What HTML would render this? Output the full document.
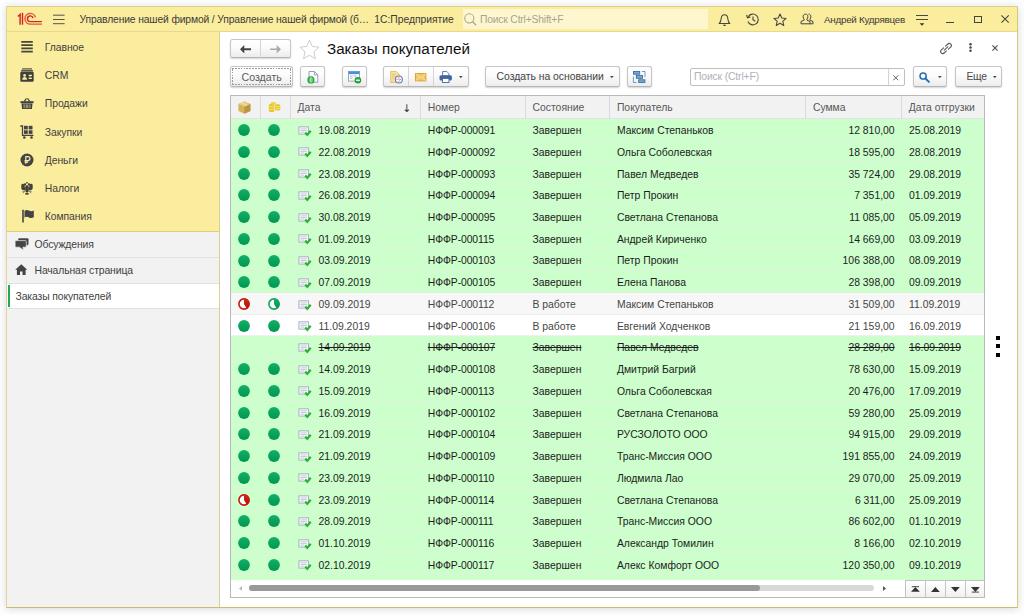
<!DOCTYPE html>
<html lang="ru">
<head>
<meta charset="utf-8">
<title>Заказы покупателей</title>
<style>
html,body{margin:0;padding:0;}
body{width:1024px;height:615px;overflow:hidden;background:#fefefe;font-family:"Liberation Sans",Arial,sans-serif;font-size:10.4px;color:#333;position:relative;}
.a{position:absolute;}
#win{left:6px;top:6px;width:1012px;height:602px;box-sizing:border-box;border:1px solid #d9cc86;border-color:#ddd08a #d6c97e #cbbd68 #e0d592;background:#fff;box-shadow:0 1px 8px rgba(0,0,0,.15);}
#tbar{left:7px;top:7px;width:1010px;height:24px;background:#fbed9e;border-bottom:1px solid #e6d88f;}
#sy{left:7px;top:32px;width:212px;height:200px;background:#fbed9e;border-bottom:1px solid #dccd80;box-sizing:border-box;}
#sg{left:7px;top:232px;width:212px;height:374.500px;background:#f2f2f2;}
#sb{left:219px;top:32px;width:1px;height:575px;background:#dccf92;}
.tt{top:13px;height:13px;line-height:13px;font-size:10.3px;letter-spacing:-0.17px;color:#3a3a3a;white-space:nowrap;}
.sit{left:44.8px;height:14px;line-height:14px;white-space:nowrap;color:#3f3f3f;letter-spacing:-0.08px;margin-top:1.2px;}
.sic{left:20px;width:14px;height:14px;}
.gl{left:7px;width:212px;height:1px;background:#e1e1e1;}
.git{height:14px;line-height:14px;white-space:nowrap;color:#3f3f3f;letter-spacing:-0.12px;margin-top:1px;}
.btn{box-sizing:border-box;border:1px solid #c6c6c6;border-bottom-color:#b6b6b6;border-radius:2.5px;background:linear-gradient(#ffffff,#fbfbfb 45%,#ececec);box-shadow:0 1px 1.5px rgba(0,0,0,.17);}
.dsh{box-sizing:border-box;background:repeating-linear-gradient(90deg,#9c9c9c 0 1.800px,transparent 1.800px 2.900px) 0 0/100% 1px no-repeat,repeating-linear-gradient(90deg,#9c9c9c 0 1.800px,transparent 1.800px 2.900px) 0 100%/100% 1px no-repeat,repeating-linear-gradient(0deg,#9c9c9c 0 1.800px,transparent 1.800px 2.900px) 0 0/1px 100% no-repeat,repeating-linear-gradient(0deg,#9c9c9c 0 1.800px,transparent 1.800px 2.900px) 100% 0/1px 100% no-repeat;}
.bt{font-size:10.4px;color:#444;white-space:nowrap;height:14px;line-height:14px;}
#tbl{left:230px;top:95px;width:755px;height:503px;box-sizing:border-box;border:1px solid #b9b9b9;background:#fff;overflow:hidden;}
#hdr{left:231px;top:96px;width:753px;height:22.6px;background:#f2f2f2;}
.hd{top:100.5px;height:14px;line-height:14px;color:#585858;white-space:nowrap;}
.hv{top:96px;width:1px;height:22.6px;background:#dadada;}
#rows{left:231px;top:95.5px;width:753px;height:484.5px;overflow:hidden;}
.row{position:absolute;left:0;width:753px;box-sizing:border-box;border-bottom:1px solid #d9f3d9;}
.rg{background:#ccffcc;color:#1c1c1c;}
.rs{background:#f7f7f7;color:#454545;border-bottom-color:#ededed;}
.rw{background:#ffffff;color:#454545;border-bottom-color:#f0f0f0;}
.rx .t{text-decoration:line-through;}
.t{position:absolute;top:4.4px;height:14px;line-height:14px;white-space:nowrap;}
.tdate{left:87.5px;}
.tnum{left:196.8px;letter-spacing:-0.1px;}
.tst{left:301.5px;}
.tbuy{left:385.9px;}
.tsum{right:89.4px;}
.tship{left:678px;}
.c1,.c2,.cd{position:absolute;}
.c1{left:6.8px;top:5.1px;}
.c2{left:37px;top:5.1px;}
.ci{display:block;width:12px;height:12px;}
.cd{left:67px;top:6.4px;}
.doc{display:block;width:14px;height:12px;}
svg{overflow:visible;}
</style>
</head>
<body>
<svg width="0" height="0" style="position:absolute"><defs>
<linearGradient id="gg" x1="0" y1="0" x2="0" y2="1"><stop offset="0" stop-color="#14ae66"/><stop offset="1" stop-color="#009850"/></linearGradient>
<linearGradient id="gr" x1="0" y1="0" x2="0" y2="1"><stop offset="0" stop-color="#d02a14"/><stop offset="1" stop-color="#b30f08"/></linearGradient>
</defs></svg>
<div id="win" class="a"></div>
<div id="tbar" class="a"></div>
<div id="sy" class="a"></div>
<div id="sg" class="a"></div>
<div id="sb" class="a"></div>

<!-- title bar -->
<svg class="a" style="left:17px;top:12px;width:26px;height:14px" viewBox="0 0 26 14">
<g fill="none" stroke="#d8232a" stroke-width="1.450">
<path d="M0.900 4.600L3.100 2.500V12.700"/>
<path d="M5.500 0.800V12.700"/>
<path d="M16.050 6.010A2.850 2.850 0 1 0 13.300 9.600L24.900 9.600"/>
<path d="M18.470 5.370A5.350 5.350 0 1 0 13.300 12.100L24.900 12.100" stroke="#e4533f"/>
</g>
</svg>
<svg class="a" style="left:53px;top:14px;width:12px;height:11px" viewBox="0 0 12 11"><path d="M0 1.200h11.600M0 5.500h11.600M0 9.700h11.600" stroke="#55554a" stroke-width="1"/></svg>
<div class="a tt" style="left:79.5px;letter-spacing:-0.13px">Управление нашей фирмой / Управление нашей фирмой (б…</div>
<div class="a tt" style="left:374.300px;letter-spacing:0">1С:Предприятие</div>
<div class="a" style="left:462.5px;top:9px;width:245.5px;height:19.6px;background:#fdf6cf"></div>
<svg class="a" style="left:464.200px;top:12.600px;width:12.800px;height:12.800px" viewBox="0 0 12 12"><circle cx="5" cy="5" r="4.300" fill="none" stroke="#a9a796" stroke-width="1"/><path d="M8.100 8.100l3.300 3.300" stroke="#a9a796" stroke-width="1.300"/></svg>
<div class="a tt" style="left:480px;color:#a7a48f">Поиск Ctrl+Shift+F</div>
<!-- bell -->
<svg class="a" style="left:718px;top:12.5px;width:13px;height:14px" viewBox="0 0 13 14"><path d="M1.2 10.5c1.6-1.2 1.8-2.6 2-5 .2-2.4 1.4-3.8 3.3-3.8s3.100 1.400 3.300 3.800c.2 2.400.4 3.800 2 5z" fill="none" stroke="#444" stroke-width="1.1" stroke-linejoin="round"/><path d="M5.300 12.300h2.400" stroke="#444" stroke-width="1.3"/></svg>
<!-- history -->
<svg class="a" style="left:745.5px;top:13px;width:13.5px;height:13px" viewBox="0 0 13.5 13"><path d="M2.300 3.600A5.400 5.400 0 1 1 1.900 8.500" fill="none" stroke="#444" stroke-width="1.1"/><path d="M0.600 1.800l0.800 3 2.900-0.900" fill="none" stroke="#444" stroke-width="1.1"/><path d="M7 3.500v3.300l2.200 1.500" fill="none" stroke="#444" stroke-width="1.1"/></svg>
<!-- star -->
<svg class="a" style="left:773px;top:12.500px;width:14px;height:13.500px" viewBox="0 0 14 13.5"><path d="M7 1l1.800 4 4.300.4-3.300 2.900 1 4.200L7 10.300 3.200 12.500l1-4.200L.9 5.400 5.200 5z" fill="none" stroke="#444" stroke-width="1.050" stroke-linejoin="round"/></svg>
<!-- users -->
<svg class="a" style="left:800px;top:13px;width:14px;height:13px" viewBox="0 0 14 13"><path d="M8.5 1.100c1.600 0 2.400 1.200 2.400 2.600 0 1.100-.4 1.900-1 2.500v.9l3.100 1.400v2.300H9.500" fill="none" stroke="#444" stroke-width="1"/><path d="M5.500 1.100c1.600 0 2.400 1.200 2.400 2.600 0 1.100-.4 1.900-1 2.500v.9l3.100 1.400v2.300H1v-2.300l3.100-1.400v-.9c-.6-.6-1-1.400-1-2.500 0-1.400.8-2.600 2.400-2.600z" fill="#fbed9e" stroke="#444" stroke-width="1"/></svg>
<div class="a tt" style="left:824px;font-size:9.8px;letter-spacing:-0.24px">Андрей Кудрявцев</div>
<svg class="a" style="left:916px;top:15px;width:12px;height:11px" viewBox="0 0 12 11"><path d="M0 0.500h12M0 4.500h12" stroke="#4a4a40" stroke-width="1"/><path d="M3.600 8.300h4.800l-2.400 2.500z" fill="#333"/></svg>
<div class="a" style="left:946px;top:22px;width:8px;height:1px;background:#444"></div>
<div class="a" style="left:974px;top:15.500px;width:7.500px;height:7.500px;box-sizing:border-box;border:1px solid #444"></div>
<svg class="a" style="left:1000.800px;top:15px;width:8.200px;height:8.200px" viewBox="0 0 9 9"><path d="M.5.500l8 8M8.500.5l-8 8" stroke="#45453c" stroke-width="1.150"/></svg>

<!-- sidebar sections -->
<svg class="a sic" style="top:40px" viewBox="0 0 14 14"><path d="M1.300 1.900h11.500M1.300 5.150h11.500M1.300 8.400h11.500M1.300 11.650h11.500" stroke="#46463e" stroke-width="1.750"/></svg>
<div class="a sit" style="top:40px">Главное</div>
<svg class="a sic" style="top:68px" viewBox="0 0 14 14"><path d="M2.300 0.300h9.400l0.600 1.300H1.700zM1.300 2.100h11.400l0.600 1.500H0.700z" fill="#55554a"/><rect x="0.300" y="3.800" width="13.400" height="9.900" rx="1.300" fill="#3f3f3f"/><circle cx="4.600" cy="7.400" r="1.400" fill="#fbed9e"/><path d="M2.200 11.800c0-1.900 1-2.700 2.400-2.700s2.400.8 2.400 2.700z" fill="#fbed9e"/><path d="M8.600 7.300h3.300M8.600 10.400h3.300" stroke="#fbed9e" stroke-width="1.200"/><path d="M9.300 8.850h1.900" stroke="#fbed9e" stroke-width="0.900" opacity="0.700"/></svg>
<div class="a sit" style="top:68px">CRM</div>
<svg class="a sic" style="top:96px" viewBox="0 0 14 14"><path d="M4.300 5.300L6.500 2.300M9.700 5.300L7.500 2.300" stroke="#44443c" stroke-width="1.200" fill="none"/><rect x="0.500" y="5.200" width="13" height="2" fill="#3f3f3f"/><path d="M1.500 7.600h11l-0.600 5.400H2.100z" fill="#3f3f3f"/><path d="M4.100 8.400v3.800M6.200 8.400v3.800M7.800 8.400v3.800M9.900 8.400v3.800" stroke="#fbed9e" stroke-width="0.800" opacity="0.850"/></svg>
<div class="a sit" style="top:96px">Продажи</div>
<svg class="a sic" style="top:124.500px" viewBox="0 0 14 14"><path d="M0.300 1h2.200v9.300h11" fill="none" stroke="#444" stroke-width="1.300"/><rect x="4" y="0.800" width="3.800" height="3.600" fill="#444"/><rect x="8.700" y="0.800" width="3.800" height="3.600" fill="#444"/><rect x="4" y="5.300" width="3.800" height="3.600" fill="#444"/><rect x="8.700" y="5.300" width="3.800" height="3.600" fill="#444"/><circle cx="4.300" cy="12.500" r="1.300" fill="#444"/><circle cx="11.500" cy="12.500" r="1.300" fill="#444"/></svg>
<div class="a sit" style="top:124.500px">Закупки</div>
<svg class="a sic" style="top:153px" viewBox="0 0 14 14"><circle cx="7" cy="7" r="6.500" fill="#444"/><path d="M5.800 10.800V3.600h2.100a2 2 0 0 1 0 4H4.600M4.600 9.100h3.600" fill="none" stroke="#fbed9e" stroke-width="1.200"/></svg>
<div class="a sit" style="top:153px">Деньги</div>
<svg class="a" style="left:21px;top:182px;width:12px;height:13px" viewBox="0 0 12 13"><g fill="#41413a"><rect x="5.300" y="0" width="1.400" height="1.600"/><circle cx="4" cy="2.300" r="1.150"/><circle cx="8" cy="2.300" r="1.150"/><path d="M0.300 3.400C0.200 1.900 1.900 1.200 2.900 2.300L4.700 4.800V8.300C3 8.700 0.700 8.100 0.300 6.500z"/><path d="M11.700 3.400C11.800 1.900 10.100 1.200 9.100 2.300L7.300 4.800V8.300C9 8.700 11.300 8.100 11.700 6.500z"/><path d="M4.500 3.300H7.500V9.400L6 10.900 4.500 9.400z"/><ellipse cx="6" cy="11.800" rx="2.100" ry="0.900"/></g><path d="M4.300 8.800L2 11.200M7.700 8.800L10 11.200M3 9.600L1.200 9.800M9 9.600L10.800 9.800" stroke="#41413a" stroke-width="0.800" opacity="0.750"/><path d="M4.700 3.600L3.300 5.300M7.300 3.600L8.700 5.300" stroke="#fbed9e" stroke-width="0.700" opacity="0.800"/></svg>
<div class="a sit" style="top:181px">Налоги</div>
<svg class="a sic" style="top:209px;left:21px" viewBox="0 0 14 14"><path d="M2 0.800v12.700" stroke="#444" stroke-width="1.600"/><path d="M3.500 1.800c1.500-1 3-1 4.500-.2s3 .8 4.800-.2v6.800c-1.800 1-3.300 1-4.800.2s-3-.8-4.500.2z" fill="#444"/></svg>
<div class="a sit" style="top:209px">Компания</div>

<!-- sidebar open windows -->
<svg class="a" style="left:14.900px;top:237.600px;width:14px;height:13px" viewBox="0 0 14 13"><rect x="3.300" y="0.200" width="10.200" height="7" rx="1.100" fill="#454545"/><path d="M1.100 2.600h9.200a1 1 0 0 1 1 1v4.600a1 1 0 0 1-1 1H7.900l0.500 3.100L4.400 9.200H1.100a1 1 0 0 1-1-1V3.600a1 1 0 0 1 1-1z" fill="#454545" stroke="#f2f2f2" stroke-width=".7"/></svg>
<div class="a git" style="left:34.500px;top:237px">Обсуждения</div>
<div class="a gl" style="top:256.500px"></div>
<svg class="a" style="left:15px;top:264px;width:12.500px;height:11px" viewBox="0 0 12.500 11"><path d="M6.250 0.300L0.200 5.800h1.700V11h3.100V7.400h2.500V11h3.100V5.800h1.700z" fill="#444"/></svg>
<div class="a git" style="left:34.500px;top:263px">Начальная страница</div>
<div class="a gl" style="top:282.500px"></div>
<div class="a" style="left:7px;top:283.500px;width:212px;height:24.500px;background:#fff"></div>
<div class="a" style="left:8px;top:284.500px;width:2px;height:22px;background:#22a85a"></div>
<div class="a git" style="left:15.500px;top:289px">Заказы покупателей</div>
<div class="a gl" style="top:308px"></div>

<!-- page header -->
<div class="a btn" style="left:230px;top:39px;width:60.500px;height:19.300px"></div>
<div class="a" style="left:260px;top:40px;width:1px;height:17.600px;background:#d4d4d4"></div>
<svg class="a" style="left:240px;top:45px;width:11px;height:8.500px" viewBox="0 0 11 8.500"><path d="M4.300 0L0 4.250l4.300 4.250V5.300H11V3.200H4.300z" fill="#444"/></svg>
<svg class="a" style="left:269.500px;top:45px;width:11px;height:8.500px" viewBox="0 0 11 8.500"><path d="M6.700 0L11 4.250 6.700 8.500V5.100H0V3.400h6.700z" fill="#aaa"/></svg>
<svg class="a" style="left:298.850px;top:38.800px;width:20.900px;height:20.500px" viewBox="0 0 20 19" preserveAspectRatio="none"><path d="M10 1l2.700 5.900 6.300.7-4.700 4.300 1.300 6.300L10 15l-5.600 3.200 1.300-6.300L1 7.600l6.300-.7z" fill="#fff" stroke="#c1c8cf" stroke-width="0.85" stroke-linejoin="round"/></svg>
<div class="a" style="left:327px;top:39.500px;height:18px;line-height:18px;font-size:15.200px;color:#111;white-space:nowrap">Заказы покупателей</div>
<!-- link, dots, close -->
<svg class="a" style="left:939px;top:41.500px;width:14px;height:13px" viewBox="-7 -6.500 14 13"><g transform="rotate(-42)" fill="none" stroke="#5a5a5a" stroke-width="1.100" stroke-linecap="round"><path d="M-1.300 -2.100H-4.400A2.100 2.100 0 0 0 -4.400 2.100H-1.300"/><path d="M1.300 2.100H4.400A2.100 2.100 0 0 0 4.400 -2.100H1.300"/><path d="M-2.400 0H2.400"/></g></svg>
<svg class="a" style="left:968.800px;top:43.300px;width:3px;height:9px" viewBox="0 0 3 9"><circle cx="1.500" cy="1.250" r="1.250" fill="#4a4a4a"/><circle cx="1.500" cy="4.500" r="1.250" fill="#4a4a4a"/><circle cx="1.500" cy="7.750" r="1.250" fill="#4a4a4a"/></svg>
<svg class="a" style="left:992.200px;top:45.100px;width:6px;height:6px" viewBox="0 0 7 7"><path d="M.5.500l6 6M6.500.5l-6 6" stroke="#505050" stroke-width="1.400"/></svg>

<!-- toolbar -->
<div class="a btn" style="left:230px;top:66px;width:63px;height:21px"></div>
<div class="a dsh" style="left:232px;top:67.700px;width:58.800px;height:17.300px"></div>
<div class="a bt" style="left:241.500px;top:69.500px;font-size:10.600px;color:#5c5c5c">Создать</div>

<div class="a btn" style="left:300px;top:66px;width:25px;height:21px"></div>
<svg class="a" style="left:307px;top:71px;width:11.500px;height:12px" viewBox="0 0 11.500 12"><path d="M2 0.500h5.400l3.400 3.300v7.400H2z" fill="#fdfdfe" stroke="#8a96ab" stroke-width="0.900"/><path d="M7.400 0.500v3.300h3.400" fill="none" stroke="#8a96ab" stroke-width="0.900"/><circle cx="3.900" cy="8.900" r="3.600" fill="#2aa83a"/><path d="M3.900 6.300v5.200" stroke="#d5f5d5" stroke-width="1.300"/><path d="M2.200 7v3.800M5.600 7v3.800" stroke="#7fd489" stroke-width="0.800"/></svg>

<div class="a btn" style="left:342px;top:66px;width:25px;height:21px"></div>
<svg class="a" style="left:348px;top:71px;width:13.500px;height:12.500px" viewBox="0 0 13.500 12.500"><rect x="0.500" y="0.500" width="11" height="9.600" fill="#fbfcfe" stroke="#8aa0bd" stroke-width="0.900"/><rect x="0.500" y="0.500" width="11" height="2.600" fill="#4a8fdc"/><path d="M2 5h2.600M2 7.200h2.600M5.600 5h3" stroke="#9fb0c6" stroke-width="0.900"/><circle cx="9.900" cy="9.300" r="3.300" fill="#1f9e36"/><path d="M7.900 9.300h4" stroke="#fff" stroke-width="1.300"/><path d="M9.900 7.800v3" stroke="#bfe8c5" stroke-width="0.900"/></svg>

<div class="a btn" style="left:383px;top:66px;width:85.500px;height:21px"></div>
<div class="a" style="left:408px;top:67px;width:1px;height:18.600px;background:#d4d4d4"></div>
<div class="a" style="left:433px;top:67px;width:1px;height:18.600px;background:#d4d4d4"></div>
<svg class="a" style="left:390px;top:71.300px;width:13.500px;height:12.500px" viewBox="0 0 13.500 12.500"><path d="M0.700 0.500h5.800l2.700 2.700v8.300H0.700z" fill="#f3e19b" stroke="#dcc169" stroke-width="0.900"/><path d="M2.200 3.400h3.300M2.200 5.400h3.300M2.200 7.400h2" stroke="#dcc169" stroke-width="0.800"/><circle cx="8.900" cy="8.500" r="3.500" fill="#fdfdff" stroke="#5b7fc0" stroke-width="1.100"/><path d="M8.900 6.300v0.800M8.900 9.900v0.800M6.700 8.500h0.800M10.300 8.500h0.800" stroke="#d4442f" stroke-width="0.900"/><path d="M8.900 7.400v1.300l0.900 0.600" fill="none" stroke="#d4442f" stroke-width="0.700"/></svg>
<svg class="a" style="left:415px;top:73px;width:11.400px;height:8.400px" viewBox="0 0 11.400 8.400"><rect x="0.500" y="0.500" width="10.400" height="7.400" fill="#f3c664" stroke="#dba436" stroke-width="1"/><path d="M0.900 0.900L5.700 4.900 10.500 0.900M0.900 7.600l3.600-3.500M10.500 7.600L6.900 4.100" fill="none" stroke="#fbe6ae" stroke-width="0.900"/></svg>
<svg class="a" style="left:438.800px;top:71.200px;width:13.400px;height:12px" viewBox="0 0 13.400 12"><path d="M3.600 0.500h4.200l2 2v2.500H3.600z" fill="#fff" stroke="#56739f" stroke-width="0.900"/><rect x="0.500" y="4.200" width="12.400" height="5.300" rx="1.500" fill="#41669f"/><rect x="3.400" y="7.400" width="6.600" height="4.100" fill="#fff" stroke="#41669f" stroke-width="0.900"/></svg>
<svg class="a" style="left:458.6px;top:76.3px;width:3.6px;height:2.2px" viewBox="0 0 4 2.400"><path d="M0 0h4L2 2.400z" fill="#4a4a4a"/></svg>

<div class="a btn" style="left:485px;top:66px;width:134.600px;height:21px"></div>
<div class="a bt" style="left:496.500px;top:70.100px;letter-spacing:-0.020px">Создать на основании</div>
<svg class="a" style="left:610px;top:76.3px;width:3.6px;height:2.2px" viewBox="0 0 4 2.400"><path d="M0 0h4L2 2.400z" fill="#4a4a4a"/></svg>

<div class="a btn" style="left:626.500px;top:66px;width:25.200px;height:21px"></div>
<svg class="a" style="left:633px;top:71px;width:12.400px;height:12px" viewBox="0 0 12.400 12"><g fill="none" stroke="#5d8fc2" stroke-width="0.900"><path d="M9 0.500h3v5.500"/><path d="M3.400 11.500h-3v-6"/><path d="M3.500 3.200v2.600M7 7.300v1.400"/></g><g fill="#7da7d2" stroke="#3a6fa8" stroke-width="0.900"><rect x="0.500" y="0.500" width="6.200" height="2.700"/><rect x="3.300" y="4.400" width="6.200" height="2.900"/><rect x="5.700" y="8.800" width="6.200" height="2.700"/></g></svg>

<div class="a" style="left:690px;top:67.500px;width:215px;height:18.600px;box-sizing:border-box;border:1px solid #bfbfbf;border-radius:2px;background:#fff"></div>
<div class="a" style="left:887.500px;top:68.500px;width:1px;height:16.600px;background:#d4d4d4"></div>
<div class="a bt" style="left:694px;top:70px;color:#b1b1b8;letter-spacing:-0.16px">Поиск (Ctrl+F)</div>
<svg class="a" style="left:893.200px;top:75px;width:5.600px;height:5.600px" viewBox="0 0 6 6"><path d="M.4.400l5.200 5.200M5.600.4L.4 5.600" stroke="#555" stroke-width="1"/></svg>

<div class="a btn" style="left:912.800px;top:66px;width:34.600px;height:21px"></div>
<svg class="a" style="left:919.300px;top:71.700px;width:11px;height:11px" viewBox="0 0 11 11"><circle cx="4.100" cy="4.100" r="3.100" fill="none" stroke="#1f6fb4" stroke-width="1.500"/><path d="M6.500 6.500l3.400 3.400" stroke="#1f6fb4" stroke-width="1.900" stroke-linecap="round"/></svg>
<svg class="a" style="left:938px;top:76.3px;width:3.6px;height:2.2px" viewBox="0 0 4 2.400"><path d="M0 0h4L2 2.400z" fill="#4a4a4a"/></svg>

<div class="a btn" style="left:955px;top:66px;width:47px;height:21px"></div>
<div class="a bt" style="left:966.400px;top:70.100px;color:#4a4a4a;letter-spacing:-0.2px">Еще</div>
<svg class="a" style="left:992.6px;top:76.1px;width:3.6px;height:2.2px" viewBox="0 0 4 2.400"><path d="M0 0h4L2 2.400z" fill="#4a4a4a"/></svg>

<!-- table -->
<div id="tbl" class="a"></div>
<div id="rows" class="a">
<div class="row rg" style="top:23.5px;height:22px"><span class="c1" style="top:5.13px"><svg class="ci" viewBox="0 0 12 12"><circle cx="6" cy="6" r="5.9" fill="url(#gg)"/></svg></span><span class="c2" style="top:5.13px"><svg class="ci" viewBox="0 0 12 12"><circle cx="6" cy="6" r="5.9" fill="url(#gg)"/></svg></span><span class="cd" style="top:6.60px"><svg class="doc" viewBox="0 0 14 12"><rect x="0.9" y="0.8" width="9.6" height="7.3" fill="#f6f7fa" stroke="#a9b3c4" stroke-width="1"/><path d="M2.6 2.9h6.2M2.6 4.5h6.2M2.6 6.1h3.4" stroke="#c3c8d2" stroke-width="0.9"/><path d="M7.200 6.500l2.100 2.400 3.400-4.200" fill="none" stroke="#2db136" stroke-width="2.200"/></svg></span><span class="t tdate" style="top:5.03px">19.08.2019</span><span class="t tnum" style="top:5.03px">НФФР-000091</span><span class="t tst" style="top:5.03px">Завершен</span><span class="t tbuy" style="top:5.03px">Максим Степаньков</span><span class="t tsum" style="top:5.03px">12 810,00</span><span class="t tship" style="top:5.03px">25.08.2019</span></div>
<div class="row rg" style="top:45.5px;height:21px"><span class="c1" style="top:4.87px"><svg class="ci" viewBox="0 0 12 12"><circle cx="6" cy="6" r="5.9" fill="url(#gg)"/></svg></span><span class="c2" style="top:4.87px"><svg class="ci" viewBox="0 0 12 12"><circle cx="6" cy="6" r="5.9" fill="url(#gg)"/></svg></span><span class="cd" style="top:6.34px"><svg class="doc" viewBox="0 0 14 12"><rect x="0.9" y="0.8" width="9.6" height="7.3" fill="#f6f7fa" stroke="#a9b3c4" stroke-width="1"/><path d="M2.6 2.9h6.2M2.6 4.5h6.2M2.6 6.1h3.4" stroke="#c3c8d2" stroke-width="0.9"/><path d="M7.200 6.500l2.100 2.400 3.400-4.200" fill="none" stroke="#2db136" stroke-width="2.200"/></svg></span><span class="t tdate" style="top:4.77px">22.08.2019</span><span class="t tnum" style="top:4.77px">НФФР-000092</span><span class="t tst" style="top:4.77px">Завершен</span><span class="t tbuy" style="top:4.77px">Ольга Соболевская</span><span class="t tsum" style="top:4.77px">18 595,00</span><span class="t tship" style="top:4.77px">28.08.2019</span></div>
<div class="row rg" style="top:66.5px;height:22px"><span class="c1" style="top:5.61px"><svg class="ci" viewBox="0 0 12 12"><circle cx="6" cy="6" r="5.9" fill="url(#gg)"/></svg></span><span class="c2" style="top:5.61px"><svg class="ci" viewBox="0 0 12 12"><circle cx="6" cy="6" r="5.9" fill="url(#gg)"/></svg></span><span class="cd" style="top:7.08px"><svg class="doc" viewBox="0 0 14 12"><rect x="0.9" y="0.8" width="9.6" height="7.3" fill="#f6f7fa" stroke="#a9b3c4" stroke-width="1"/><path d="M2.6 2.9h6.2M2.6 4.5h6.2M2.6 6.1h3.4" stroke="#c3c8d2" stroke-width="0.9"/><path d="M7.200 6.500l2.100 2.400 3.400-4.200" fill="none" stroke="#2db136" stroke-width="2.200"/></svg></span><span class="t tdate" style="top:5.51px">23.08.2019</span><span class="t tnum" style="top:5.51px">НФФР-000093</span><span class="t tst" style="top:5.51px">Завершен</span><span class="t tbuy" style="top:5.51px">Павел Медведев</span><span class="t tsum" style="top:5.51px">35 724,00</span><span class="t tship" style="top:5.51px">29.08.2019</span></div>
<div class="row rg" style="top:88.5px;height:22px"><span class="c1" style="top:5.35px"><svg class="ci" viewBox="0 0 12 12"><circle cx="6" cy="6" r="5.9" fill="url(#gg)"/></svg></span><span class="c2" style="top:5.35px"><svg class="ci" viewBox="0 0 12 12"><circle cx="6" cy="6" r="5.9" fill="url(#gg)"/></svg></span><span class="cd" style="top:6.82px"><svg class="doc" viewBox="0 0 14 12"><rect x="0.9" y="0.8" width="9.6" height="7.3" fill="#f6f7fa" stroke="#a9b3c4" stroke-width="1"/><path d="M2.6 2.9h6.2M2.6 4.5h6.2M2.6 6.1h3.4" stroke="#c3c8d2" stroke-width="0.9"/><path d="M7.200 6.500l2.100 2.400 3.400-4.200" fill="none" stroke="#2db136" stroke-width="2.200"/></svg></span><span class="t tdate" style="top:5.25px">26.08.2019</span><span class="t tnum" style="top:5.25px">НФФР-000094</span><span class="t tst" style="top:5.25px">Завершен</span><span class="t tbuy" style="top:5.25px">Петр Прокин</span><span class="t tsum" style="top:5.25px">7 351,00</span><span class="t tship" style="top:5.25px">01.09.2019</span></div>
<div class="row rg" style="top:110.5px;height:22px"><span class="c1" style="top:5.09px"><svg class="ci" viewBox="0 0 12 12"><circle cx="6" cy="6" r="5.9" fill="url(#gg)"/></svg></span><span class="c2" style="top:5.09px"><svg class="ci" viewBox="0 0 12 12"><circle cx="6" cy="6" r="5.9" fill="url(#gg)"/></svg></span><span class="cd" style="top:6.56px"><svg class="doc" viewBox="0 0 14 12"><rect x="0.9" y="0.8" width="9.6" height="7.3" fill="#f6f7fa" stroke="#a9b3c4" stroke-width="1"/><path d="M2.6 2.9h6.2M2.6 4.5h6.2M2.6 6.1h3.4" stroke="#c3c8d2" stroke-width="0.9"/><path d="M7.200 6.500l2.100 2.400 3.400-4.200" fill="none" stroke="#2db136" stroke-width="2.200"/></svg></span><span class="t tdate" style="top:4.99px">30.08.2019</span><span class="t tnum" style="top:4.99px">НФФР-000095</span><span class="t tst" style="top:4.99px">Завершен</span><span class="t tbuy" style="top:4.99px">Светлана Степанова</span><span class="t tsum" style="top:4.99px">11 085,00</span><span class="t tship" style="top:4.99px">05.09.2019</span></div>
<div class="row rg" style="top:132.5px;height:21px"><span class="c1" style="top:4.83px"><svg class="ci" viewBox="0 0 12 12"><circle cx="6" cy="6" r="5.9" fill="url(#gg)"/></svg></span><span class="c2" style="top:4.83px"><svg class="ci" viewBox="0 0 12 12"><circle cx="6" cy="6" r="5.9" fill="url(#gg)"/></svg></span><span class="cd" style="top:6.30px"><svg class="doc" viewBox="0 0 14 12"><rect x="0.9" y="0.8" width="9.6" height="7.3" fill="#f6f7fa" stroke="#a9b3c4" stroke-width="1"/><path d="M2.6 2.9h6.2M2.6 4.5h6.2M2.6 6.1h3.4" stroke="#c3c8d2" stroke-width="0.9"/><path d="M7.200 6.500l2.100 2.400 3.400-4.200" fill="none" stroke="#2db136" stroke-width="2.200"/></svg></span><span class="t tdate" style="top:4.73px">01.09.2019</span><span class="t tnum" style="top:4.73px">НФФР-000115</span><span class="t tst" style="top:4.73px">Завершен</span><span class="t tbuy" style="top:4.73px">Андрей Кириченко</span><span class="t tsum" style="top:4.73px">14 669,00</span><span class="t tship" style="top:4.73px">03.09.2019</span></div>
<div class="row rg" style="top:153.5px;height:22px"><span class="c1" style="top:5.57px"><svg class="ci" viewBox="0 0 12 12"><circle cx="6" cy="6" r="5.9" fill="url(#gg)"/></svg></span><span class="c2" style="top:5.57px"><svg class="ci" viewBox="0 0 12 12"><circle cx="6" cy="6" r="5.9" fill="url(#gg)"/></svg></span><span class="cd" style="top:7.04px"><svg class="doc" viewBox="0 0 14 12"><rect x="0.9" y="0.8" width="9.6" height="7.3" fill="#f6f7fa" stroke="#a9b3c4" stroke-width="1"/><path d="M2.6 2.9h6.2M2.6 4.5h6.2M2.6 6.1h3.4" stroke="#c3c8d2" stroke-width="0.9"/><path d="M7.200 6.500l2.100 2.400 3.400-4.200" fill="none" stroke="#2db136" stroke-width="2.200"/></svg></span><span class="t tdate" style="top:5.47px">03.09.2019</span><span class="t tnum" style="top:5.47px">НФФР-000103</span><span class="t tst" style="top:5.47px">Завершен</span><span class="t tbuy" style="top:5.47px">Петр Прокин</span><span class="t tsum" style="top:5.47px">106 388,00</span><span class="t tship" style="top:5.47px">08.09.2019</span></div>
<div class="row rg" style="top:175.5px;height:22px"><span class="c1" style="top:5.31px"><svg class="ci" viewBox="0 0 12 12"><circle cx="6" cy="6" r="5.9" fill="url(#gg)"/></svg></span><span class="c2" style="top:5.31px"><svg class="ci" viewBox="0 0 12 12"><circle cx="6" cy="6" r="5.9" fill="url(#gg)"/></svg></span><span class="cd" style="top:6.78px"><svg class="doc" viewBox="0 0 14 12"><rect x="0.9" y="0.8" width="9.6" height="7.3" fill="#f6f7fa" stroke="#a9b3c4" stroke-width="1"/><path d="M2.6 2.9h6.2M2.6 4.5h6.2M2.6 6.1h3.4" stroke="#c3c8d2" stroke-width="0.9"/><path d="M7.200 6.500l2.100 2.400 3.400-4.200" fill="none" stroke="#2db136" stroke-width="2.200"/></svg></span><span class="t tdate" style="top:5.21px">07.09.2019</span><span class="t tnum" style="top:5.21px">НФФР-000105</span><span class="t tst" style="top:5.21px">Завершен</span><span class="t tbuy" style="top:5.21px">Елена Панова</span><span class="t tsum" style="top:5.21px">28 398,00</span><span class="t tship" style="top:5.21px">09.09.2019</span></div>
<div class="row rs" style="top:197.5px;height:22px"><span class="c1" style="top:5.05px"><svg class="ci" viewBox="0 0 12 12"><circle cx="6" cy="6" r="5.1" fill="#fff" stroke="#c4190c" stroke-width="1.6"/><path d="M6 6 L6 0.5 A5.5 5.5 0 0 1 8.9 10.7 Z" fill="url(#gr)"/></svg></span><span class="c2" style="top:5.05px"><svg class="ci" viewBox="0 0 12 12"><circle cx="6" cy="6" r="5.1" fill="#fff" stroke="#0aa75a" stroke-width="1.6"/><path d="M6 6 L6 0.5 A5.5 5.5 0 0 1 8.9 10.7 Z" fill="url(#gg)"/></svg></span><span class="cd" style="top:6.52px"><svg class="doc" viewBox="0 0 14 12"><rect x="0.9" y="0.8" width="9.6" height="7.3" fill="#f6f7fa" stroke="#a9b3c4" stroke-width="1"/><path d="M2.6 2.9h6.2M2.6 4.5h6.2M2.6 6.1h3.4" stroke="#c3c8d2" stroke-width="0.9"/><path d="M7.200 6.500l2.100 2.400 3.400-4.200" fill="none" stroke="#2db136" stroke-width="2.200"/></svg></span><span class="t tdate" style="top:4.95px">09.09.2019</span><span class="t tnum" style="top:4.95px">НФФР-000112</span><span class="t tst" style="top:4.95px">В работе</span><span class="t tbuy" style="top:4.95px">Максим Степаньков</span><span class="t tsum" style="top:4.95px">31 509,00</span><span class="t tship" style="top:4.95px">11.09.2019</span></div>
<div class="row rw" style="top:219.5px;height:21px"><span class="c1" style="top:4.79px"><svg class="ci" viewBox="0 0 12 12"><circle cx="6" cy="6" r="5.9" fill="url(#gg)"/></svg></span><span class="c2" style="top:4.79px"><svg class="ci" viewBox="0 0 12 12"><circle cx="6" cy="6" r="5.9" fill="url(#gg)"/></svg></span><span class="cd" style="top:6.26px"><svg class="doc" viewBox="0 0 14 12"><rect x="0.9" y="0.8" width="9.6" height="7.3" fill="#f6f7fa" stroke="#a9b3c4" stroke-width="1"/><path d="M2.6 2.9h6.2M2.6 4.5h6.2M2.6 6.1h3.4" stroke="#c3c8d2" stroke-width="0.9"/><path d="M7.200 6.500l2.100 2.400 3.400-4.200" fill="none" stroke="#2db136" stroke-width="2.200"/></svg></span><span class="t tdate" style="top:4.69px">11.09.2019</span><span class="t tnum" style="top:4.69px">НФФР-000106</span><span class="t tst" style="top:4.69px">В работе</span><span class="t tbuy" style="top:4.69px">Евгений Ходченков</span><span class="t tsum" style="top:4.69px">21 159,00</span><span class="t tship" style="top:4.69px">16.09.2019</span></div>
<div class="row rg rx" style="top:240.5px;height:22px"><span class="cd" style="top:7.00px"><svg class="doc" viewBox="0 0 14 12"><rect x="0.9" y="0.8" width="9.6" height="7.3" fill="#f6f7fa" stroke="#a9b3c4" stroke-width="1"/><path d="M2.6 2.9h6.2M2.6 4.5h6.2M2.6 6.1h3.4" stroke="#c3c8d2" stroke-width="0.9"/><path d="M7.200 6.500l2.100 2.400 3.400-4.200" fill="none" stroke="#2db136" stroke-width="2.200"/></svg></span><span class="t tdate" style="top:5.43px">14.09.2019</span><span class="t tnum" style="top:5.43px">НФФР-000107</span><span class="t tst" style="top:5.43px">Завершен</span><span class="t tbuy" style="top:5.43px">Павел Медведев</span><span class="t tsum" style="top:5.43px">28 289,00</span><span class="t tship" style="top:5.43px">16.09.2019</span></div>
<div class="row rg" style="top:262.5px;height:22px"><span class="c1" style="top:5.27px"><svg class="ci" viewBox="0 0 12 12"><circle cx="6" cy="6" r="5.9" fill="url(#gg)"/></svg></span><span class="c2" style="top:5.27px"><svg class="ci" viewBox="0 0 12 12"><circle cx="6" cy="6" r="5.9" fill="url(#gg)"/></svg></span><span class="cd" style="top:6.74px"><svg class="doc" viewBox="0 0 14 12"><rect x="0.9" y="0.8" width="9.6" height="7.3" fill="#f6f7fa" stroke="#a9b3c4" stroke-width="1"/><path d="M2.6 2.9h6.2M2.6 4.5h6.2M2.6 6.1h3.4" stroke="#c3c8d2" stroke-width="0.9"/><path d="M7.200 6.500l2.100 2.400 3.400-4.200" fill="none" stroke="#2db136" stroke-width="2.200"/></svg></span><span class="t tdate" style="top:5.17px">14.09.2019</span><span class="t tnum" style="top:5.17px">НФФР-000108</span><span class="t tst" style="top:5.17px">Завершен</span><span class="t tbuy" style="top:5.17px">Дмитрий Багрий</span><span class="t tsum" style="top:5.17px">78 630,00</span><span class="t tship" style="top:5.17px">15.09.2019</span></div>
<div class="row rg" style="top:284.5px;height:22px"><span class="c1" style="top:5.01px"><svg class="ci" viewBox="0 0 12 12"><circle cx="6" cy="6" r="5.9" fill="url(#gg)"/></svg></span><span class="c2" style="top:5.01px"><svg class="ci" viewBox="0 0 12 12"><circle cx="6" cy="6" r="5.9" fill="url(#gg)"/></svg></span><span class="cd" style="top:6.48px"><svg class="doc" viewBox="0 0 14 12"><rect x="0.9" y="0.8" width="9.6" height="7.3" fill="#f6f7fa" stroke="#a9b3c4" stroke-width="1"/><path d="M2.6 2.9h6.2M2.6 4.5h6.2M2.6 6.1h3.4" stroke="#c3c8d2" stroke-width="0.9"/><path d="M7.200 6.500l2.100 2.400 3.400-4.200" fill="none" stroke="#2db136" stroke-width="2.200"/></svg></span><span class="t tdate" style="top:4.91px">15.09.2019</span><span class="t tnum" style="top:4.91px">НФФР-000113</span><span class="t tst" style="top:4.91px">Завершен</span><span class="t tbuy" style="top:4.91px">Ольга Соболевская</span><span class="t tsum" style="top:4.91px">20 476,00</span><span class="t tship" style="top:4.91px">17.09.2019</span></div>
<div class="row rg" style="top:306.5px;height:21px"><span class="c1" style="top:4.75px"><svg class="ci" viewBox="0 0 12 12"><circle cx="6" cy="6" r="5.9" fill="url(#gg)"/></svg></span><span class="c2" style="top:4.75px"><svg class="ci" viewBox="0 0 12 12"><circle cx="6" cy="6" r="5.9" fill="url(#gg)"/></svg></span><span class="cd" style="top:6.22px"><svg class="doc" viewBox="0 0 14 12"><rect x="0.9" y="0.8" width="9.6" height="7.3" fill="#f6f7fa" stroke="#a9b3c4" stroke-width="1"/><path d="M2.6 2.9h6.2M2.6 4.5h6.2M2.6 6.1h3.4" stroke="#c3c8d2" stroke-width="0.9"/><path d="M7.200 6.500l2.100 2.400 3.400-4.200" fill="none" stroke="#2db136" stroke-width="2.200"/></svg></span><span class="t tdate" style="top:4.65px">16.09.2019</span><span class="t tnum" style="top:4.65px">НФФР-000102</span><span class="t tst" style="top:4.65px">Завершен</span><span class="t tbuy" style="top:4.65px">Светлана Степанова</span><span class="t tsum" style="top:4.65px">59 280,00</span><span class="t tship" style="top:4.65px">25.09.2019</span></div>
<div class="row rg" style="top:327.5px;height:22px"><span class="c1" style="top:5.49px"><svg class="ci" viewBox="0 0 12 12"><circle cx="6" cy="6" r="5.9" fill="url(#gg)"/></svg></span><span class="c2" style="top:5.49px"><svg class="ci" viewBox="0 0 12 12"><circle cx="6" cy="6" r="5.9" fill="url(#gg)"/></svg></span><span class="cd" style="top:6.96px"><svg class="doc" viewBox="0 0 14 12"><rect x="0.9" y="0.8" width="9.6" height="7.3" fill="#f6f7fa" stroke="#a9b3c4" stroke-width="1"/><path d="M2.6 2.9h6.2M2.6 4.5h6.2M2.6 6.1h3.4" stroke="#c3c8d2" stroke-width="0.9"/><path d="M7.200 6.500l2.100 2.400 3.400-4.200" fill="none" stroke="#2db136" stroke-width="2.200"/></svg></span><span class="t tdate" style="top:5.39px">21.09.2019</span><span class="t tnum" style="top:5.39px">НФФР-000104</span><span class="t tst" style="top:5.39px">Завершен</span><span class="t tbuy" style="top:5.39px">РУСЗОЛОТО ООО</span><span class="t tsum" style="top:5.39px">94 915,00</span><span class="t tship" style="top:5.39px">29.09.2019</span></div>
<div class="row rg" style="top:349.5px;height:22px"><span class="c1" style="top:5.23px"><svg class="ci" viewBox="0 0 12 12"><circle cx="6" cy="6" r="5.9" fill="url(#gg)"/></svg></span><span class="c2" style="top:5.23px"><svg class="ci" viewBox="0 0 12 12"><circle cx="6" cy="6" r="5.9" fill="url(#gg)"/></svg></span><span class="cd" style="top:6.70px"><svg class="doc" viewBox="0 0 14 12"><rect x="0.9" y="0.8" width="9.6" height="7.3" fill="#f6f7fa" stroke="#a9b3c4" stroke-width="1"/><path d="M2.6 2.9h6.2M2.6 4.5h6.2M2.6 6.1h3.4" stroke="#c3c8d2" stroke-width="0.9"/><path d="M7.200 6.500l2.100 2.400 3.400-4.200" fill="none" stroke="#2db136" stroke-width="2.200"/></svg></span><span class="t tdate" style="top:5.13px">21.09.2019</span><span class="t tnum" style="top:5.13px">НФФР-000109</span><span class="t tst" style="top:5.13px">Завершен</span><span class="t tbuy" style="top:5.13px">Транс-Миссия ООО</span><span class="t tsum" style="top:5.13px">191 855,00</span><span class="t tship" style="top:5.13px">24.09.2019</span></div>
<div class="row rg" style="top:371.5px;height:22px"><span class="c1" style="top:4.97px"><svg class="ci" viewBox="0 0 12 12"><circle cx="6" cy="6" r="5.9" fill="url(#gg)"/></svg></span><span class="c2" style="top:4.97px"><svg class="ci" viewBox="0 0 12 12"><circle cx="6" cy="6" r="5.9" fill="url(#gg)"/></svg></span><span class="cd" style="top:6.44px"><svg class="doc" viewBox="0 0 14 12"><rect x="0.9" y="0.8" width="9.6" height="7.3" fill="#f6f7fa" stroke="#a9b3c4" stroke-width="1"/><path d="M2.6 2.9h6.2M2.6 4.5h6.2M2.6 6.1h3.4" stroke="#c3c8d2" stroke-width="0.9"/><path d="M7.200 6.500l2.100 2.400 3.400-4.200" fill="none" stroke="#2db136" stroke-width="2.200"/></svg></span><span class="t tdate" style="top:4.87px">23.09.2019</span><span class="t tnum" style="top:4.87px">НФФР-000110</span><span class="t tst" style="top:4.87px">Завершен</span><span class="t tbuy" style="top:4.87px">Людмила Лао</span><span class="t tsum" style="top:4.87px">29 070,00</span><span class="t tship" style="top:4.87px">25.09.2019</span></div>
<div class="row rg" style="top:393.5px;height:21px"><span class="c1" style="top:4.71px"><svg class="ci" viewBox="0 0 12 12"><circle cx="6" cy="6" r="5.1" fill="#fff" stroke="#c4190c" stroke-width="1.6"/><path d="M6 6 L6 0.5 A5.5 5.5 0 0 1 8.9 10.7 Z" fill="url(#gr)"/></svg></span><span class="c2" style="top:4.71px"><svg class="ci" viewBox="0 0 12 12"><circle cx="6" cy="6" r="5.9" fill="url(#gg)"/></svg></span><span class="cd" style="top:6.18px"><svg class="doc" viewBox="0 0 14 12"><rect x="0.9" y="0.8" width="9.6" height="7.3" fill="#f6f7fa" stroke="#a9b3c4" stroke-width="1"/><path d="M2.6 2.9h6.2M2.6 4.5h6.2M2.6 6.1h3.4" stroke="#c3c8d2" stroke-width="0.9"/><path d="M7.200 6.500l2.100 2.400 3.400-4.200" fill="none" stroke="#2db136" stroke-width="2.200"/></svg></span><span class="t tdate" style="top:4.61px">23.09.2019</span><span class="t tnum" style="top:4.61px">НФФР-000114</span><span class="t tst" style="top:4.61px">Завершен</span><span class="t tbuy" style="top:4.61px">Светлана Степанова</span><span class="t tsum" style="top:4.61px">6 311,00</span><span class="t tship" style="top:4.61px">25.09.2019</span></div>
<div class="row rg" style="top:414.5px;height:22px"><span class="c1" style="top:5.45px"><svg class="ci" viewBox="0 0 12 12"><circle cx="6" cy="6" r="5.9" fill="url(#gg)"/></svg></span><span class="c2" style="top:5.45px"><svg class="ci" viewBox="0 0 12 12"><circle cx="6" cy="6" r="5.9" fill="url(#gg)"/></svg></span><span class="cd" style="top:6.92px"><svg class="doc" viewBox="0 0 14 12"><rect x="0.9" y="0.8" width="9.6" height="7.3" fill="#f6f7fa" stroke="#a9b3c4" stroke-width="1"/><path d="M2.6 2.9h6.2M2.6 4.5h6.2M2.6 6.1h3.4" stroke="#c3c8d2" stroke-width="0.9"/><path d="M7.200 6.500l2.100 2.400 3.400-4.200" fill="none" stroke="#2db136" stroke-width="2.200"/></svg></span><span class="t tdate" style="top:5.35px">28.09.2019</span><span class="t tnum" style="top:5.35px">НФФР-000111</span><span class="t tst" style="top:5.35px">Завершен</span><span class="t tbuy" style="top:5.35px">Транс-Миссия ООО</span><span class="t tsum" style="top:5.35px">86 602,00</span><span class="t tship" style="top:5.35px">01.10.2019</span></div>
<div class="row rg" style="top:436.5px;height:22px"><span class="c1" style="top:5.19px"><svg class="ci" viewBox="0 0 12 12"><circle cx="6" cy="6" r="5.9" fill="url(#gg)"/></svg></span><span class="c2" style="top:5.19px"><svg class="ci" viewBox="0 0 12 12"><circle cx="6" cy="6" r="5.9" fill="url(#gg)"/></svg></span><span class="cd" style="top:6.66px"><svg class="doc" viewBox="0 0 14 12"><rect x="0.9" y="0.8" width="9.6" height="7.3" fill="#f6f7fa" stroke="#a9b3c4" stroke-width="1"/><path d="M2.6 2.9h6.2M2.6 4.5h6.2M2.6 6.1h3.4" stroke="#c3c8d2" stroke-width="0.9"/><path d="M7.200 6.500l2.100 2.400 3.400-4.200" fill="none" stroke="#2db136" stroke-width="2.200"/></svg></span><span class="t tdate" style="top:5.09px">01.10.2019</span><span class="t tnum" style="top:5.09px">НФФР-000116</span><span class="t tst" style="top:5.09px">Завершен</span><span class="t tbuy" style="top:5.09px">Александр Томилин</span><span class="t tsum" style="top:5.09px">8 166,00</span><span class="t tship" style="top:5.09px">02.10.2019</span></div>
<div class="row rg" style="top:458.5px;height:22px"><span class="c1" style="top:4.93px"><svg class="ci" viewBox="0 0 12 12"><circle cx="6" cy="6" r="5.9" fill="url(#gg)"/></svg></span><span class="c2" style="top:4.93px"><svg class="ci" viewBox="0 0 12 12"><circle cx="6" cy="6" r="5.9" fill="url(#gg)"/></svg></span><span class="cd" style="top:6.40px"><svg class="doc" viewBox="0 0 14 12"><rect x="0.9" y="0.8" width="9.6" height="7.3" fill="#f6f7fa" stroke="#a9b3c4" stroke-width="1"/><path d="M2.6 2.9h6.2M2.6 4.5h6.2M2.6 6.1h3.4" stroke="#c3c8d2" stroke-width="0.9"/><path d="M7.200 6.500l2.100 2.400 3.400-4.200" fill="none" stroke="#2db136" stroke-width="2.200"/></svg></span><span class="t tdate" style="top:4.83px">02.10.2019</span><span class="t tnum" style="top:4.83px">НФФР-000117</span><span class="t tst" style="top:4.83px">Завершен</span><span class="t tbuy" style="top:4.83px">Алекс Комфорт ООО</span><span class="t tsum" style="top:4.83px">120 350,00</span><span class="t tship" style="top:4.83px">09.10.2019</span></div>
<div class="row rg" style="top:480.5px;height:21px"></div>

</div>
<div id="hdr" class="a"></div>
<div class="a" style="left:231px;top:118px;width:753px;height:1px;background:#e4e4e4"></div>
<div class="a hv" style="left:260px"></div>
<div class="a hv" style="left:290px"></div>
<div class="a hv" style="left:420px"></div>
<div class="a hv" style="left:525px"></div>
<div class="a hv" style="left:609px"></div>
<div class="a hv" style="left:805px"></div>
<div class="a hv" style="left:901px"></div>
<!-- box icon -->
<svg class="a" style="left:237.5px;top:100.5px;width:13px;height:13px" viewBox="0 0 13 13"><path d="M6.4 0.5L12.4 3v6.9L6.4 12.7 0.400 9.900V3z" fill="#d3b35b"/><path d="M6.400 0.500L12.400 3 6.400 5.700 0.400 3z" fill="#e6cd84"/><path d="M6.400 5.700v7l6-2.800V3z" fill="#b9973f"/><path d="M3.200 1.800l6 2.700" fill="none" stroke="#f0dfa6" stroke-width="1.100"/></svg>
<!-- coins icon -->
<svg class="a" style="left:268px;top:101px;width:13px;height:12px" viewBox="0 0 13 12"><rect x="0.800" y="2.900" width="5.600" height="8" rx="1.600" fill="#e5c42a"/><rect x="7" y="3.200" width="5.300" height="6.400" rx="1.600" fill="#e5c42a"/><ellipse cx="5.300" cy="2.500" rx="2.800" ry="1.400" fill="#efd445"/><path d="M1.200 5.700h4.800M1.200 8.300h4.800M7.400 5.600h4.500M7.400 7.700h4.500" stroke="#f7ea86" stroke-width="0.9"/></svg>
<div class="a hd" style="left:297.500px">Дата</div>
<div class="a hd" style="left:402.300px;top:101.800px;font-family:'DejaVu Sans',sans-serif;font-size:10.800px;color:#333">↓</div>
<div class="a hd" style="left:427.800px">Номер</div>
<div class="a hd" style="left:532.500px">Состояние</div>
<div class="a hd" style="left:616.900px">Покупатель</div>
<div class="a hd" style="left:812.900px">Сумма</div>
<div class="a hd" style="left:908.800px">Дата отгрузки</div>

<!-- scroll area -->
<div class="a" style="left:231px;top:580px;width:753px;height:17px;background:#fff"></div>
<svg class="a" style="left:238.500px;top:585.500px;width:3px;height:5px" viewBox="0 0 3 5"><path d="M3 0v5L0 2.500z" fill="#bbb"/></svg>
<div class="a" style="left:248.700px;top:585px;width:625px;height:6.400px;border-radius:3.200px;background:#d8d8d8"></div>
<div class="a" style="left:248.700px;top:585px;width:511px;height:6.400px;border-radius:3.200px;background:#999"></div>
<svg class="a" style="left:882.500px;top:585.500px;width:3px;height:5px" viewBox="0 0 3 5"><path d="M0 0v5l3-2.500z" fill="#555"/></svg>
<div class="a" style="left:905px;top:580px;width:79px;height:17px;box-sizing:border-box;border:1px solid #c2c2c2;border-right:none;border-bottom:none;background:linear-gradient(#fff,#f0f0f0)"></div>
<div class="a" style="left:925px;top:581px;width:1px;height:16px;background:#c6c6c6"></div>
<div class="a" style="left:945px;top:581px;width:1px;height:16px;background:#c6c6c6"></div>
<div class="a" style="left:964.500px;top:581px;width:1px;height:16px;background:#c6c6c6"></div>
<svg class="a" style="left:911.200px;top:586px;width:8.800px;height:6px" viewBox="0 0 8.800 6"><path d="M0.800 0.700h7.200" stroke="#333" stroke-width="0.900"/><path d="M4.400 0.900L0 5.800h8.800z" fill="#333"/></svg>
<svg class="a" style="left:931px;top:587px;width:8.800px;height:4.900px" viewBox="0 0 8.800 4.900"><path d="M4.400 0L0 4.900h8.800z" fill="#333"/></svg>
<svg class="a" style="left:950.900px;top:587px;width:8.800px;height:4.900px" viewBox="0 0 8.800 4.900"><path d="M4.400 4.900L0 0h8.800z" fill="#333"/></svg>
<svg class="a" style="left:970.500px;top:587px;width:8.800px;height:6px" viewBox="0 0 8.800 6"><path d="M0.800 5.100h7.200" stroke="#333" stroke-width="0.900"/><path d="M4.400 4.900L0 0h8.800z" fill="#333"/></svg>

<!-- right dots -->
<div class="a" style="left:995.700px;top:335.900px;width:4.400px;height:4.100px;background:#000"></div>
<div class="a" style="left:995.700px;top:344.400px;width:4.400px;height:4.100px;background:#000"></div>
<div class="a" style="left:995.700px;top:352.900px;width:4.400px;height:4.100px;background:#000"></div>
</body>
</html>
